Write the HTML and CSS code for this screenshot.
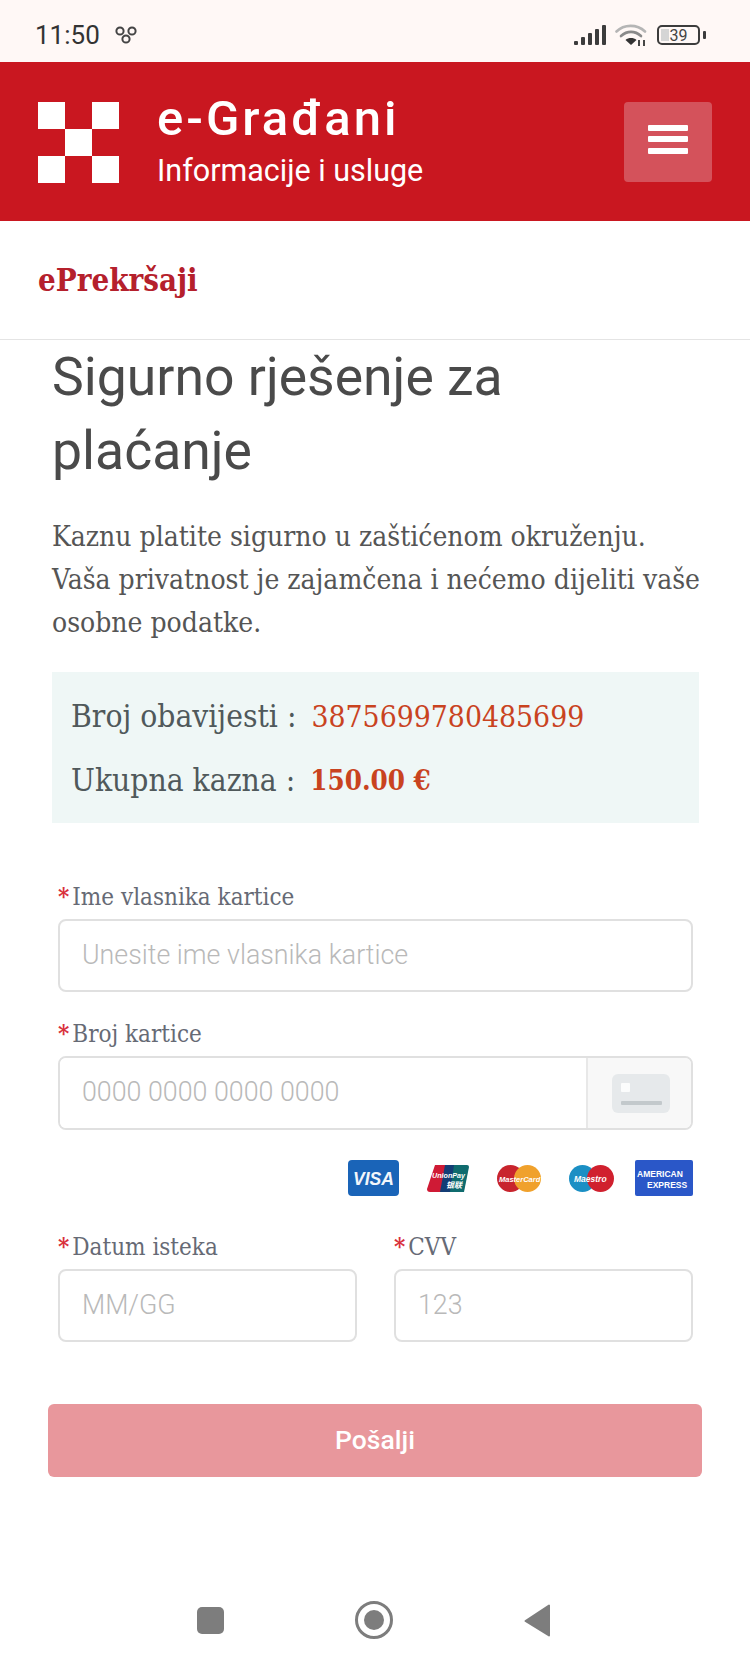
FILE: index.html
```html
<!DOCTYPE html>
<html lang="hr">
<head>
<meta charset="utf-8">
<title>ePrekršaji</title>
<link rel="stylesheet" href="styles.css">
</head>
<body>
<div class="page">
  <div class="status">
    <div class="status-left">
      <span class="time">11:50</span>
      <svg class="notif" width="22" height="18" viewBox="0 0 22 18"><g fill="none" stroke="#444" stroke-width="2"><circle cx="5" cy="5" r="3.6"/><circle cx="17" cy="5" r="3.6"/><circle cx="11" cy="13" r="3.6"/></g></svg>
    </div>
    <div class="status-right">
      <svg width="34" height="22" viewBox="0 0 34 22"><g fill="#3c3c3c"><rect x="1" y="17" width="4" height="4" rx="1"/><rect x="8" y="13" width="4" height="8" rx="1"/><rect x="15" y="9" width="4" height="12" rx="1"/><rect x="22" y="5" width="4" height="16" rx="1"/><rect x="29" y="1" width="4" height="20" rx="1"/></g></svg>
      <svg class="wifi" width="32" height="24" viewBox="0 0 32 24"><g fill="none" stroke-linecap="round"><path d="M1.5 8.5C9 1 22 1 30 8.5" stroke="#b5b5b5" stroke-width="2.6"/><path d="M6 13c6-5.500 14-5.500 20 0" stroke="#8a8a8a" stroke-width="2.600"/></g><path d="M10.500 17c3-2.600 8-2.600 11 0l-5.500 5z" fill="#333"/><path d="M24 23v-6M29 23v-6" stroke="#333" stroke-width="1.800"/></svg>
      <div class="battery"><div class="battery-body"><span class="battery-level"></span><span class="battery-text">39</span></div><span class="battery-tip"></span></div>
    </div>
  </div>

  <header class="header">
    <div class="brand">
      <svg class="logo" width="81" height="81" viewBox="0 0 81 81"><g fill="#fff"><rect width="27" height="27"/><rect x="54" width="27" height="27"/><rect x="27" y="27" width="27" height="27"/><rect y="54" width="27" height="27"/><rect x="54" y="54" width="27" height="27"/></g></svg>
      <div class="brand-text">
        <div class="brand-title">e-Građani</div>
        <div class="brand-sub">Informacije i usluge</div>
      </div>
    </div>
    <button class="menu-btn" type="button" aria-label="Izbornik"><span></span><span></span><span></span></button>
  </header>

  <nav class="subnav"><a class="subnav-link">ePrekršaji</a></nav>

  <main class="content">
    <h1 class="title">Sigurno rješenje za plaćanje</h1>
    <p class="lead">Kaznu platite sigurno u zaštićenom okruženju. Vaša privatnost je zajamčena i nećemo dijeliti vaše osobne podatke.</p>

    <div class="summary">
      <div class="summary-row"><span class="summary-label">Broj obavijesti :</span><span class="summary-value">3875699780485699</span></div>
      <div class="summary-row"><span class="summary-label">Ukupna kazna :</span><strong class="summary-value summary-total">150.00 €</strong></div>
    </div>

    <form class="form">
      <div class="field">
        <label class="label"><span class="req">*</span>Ime vlasnika kartice</label>
        <input class="input" placeholder="Unesite ime vlasnika kartice">
      </div>
      <div class="field field-gap">
        <label class="label"><span class="req">*</span>Broj kartice</label>
        <div class="input-group">
          <input class="input input-inner" placeholder="0000 0000 0000 0000">
          <div class="addon">
            <svg width="58" height="39" viewBox="0 0 58 39"><rect width="58" height="39" rx="6" fill="#e6e9eb"/><rect x="9" y="9" width="9" height="9" rx="1" fill="#fbfcfc"/><rect x="9" y="27" width="41" height="4" rx="1" fill="#c3c9cc"/></svg>
          </div>
        </div>
      </div>
      <div class="cards">
        <svg width="51" height="36" viewBox="0 0 51 36"><rect width="51" height="36" rx="4" fill="#1a64b8"/><text x="5" y="24.500" class="visa" textLength="41" lengthAdjust="spacingAndGlyphs">VISA</text></svg>
        <svg width="42" height="27" viewBox="0 0 42 27"><path d="M8 0h14l-5 27H3a3 3 0 0 1-3-3z" fill="#cf1a35"/><path d="M18 0h12l-5 27H13z" fill="#133d75"/><path d="M27 0h13a2 2 0 0 1 2 2l-5 25H23z" fill="#0f6b6e"/><text x="5" y="13" class="up" textLength="33" lengthAdjust="spacingAndGlyphs">UnionPay</text><text x="19" y="23" class="up">银联</text></svg>
        <svg width="44" height="27" viewBox="0 0 44 27"><circle cx="13.500" cy="13.500" r="13.500" fill="#c8242d"/><circle cx="30.500" cy="13.500" r="13.500" fill="#f0a12c"/><text x="2" y="16.500" class="mc">MasterCard</text></svg>
        <svg width="45" height="27" viewBox="0 0 45 27"><circle cx="13.500" cy="13.500" r="13.500" fill="#1b8fc4"/><circle cx="31.500" cy="13.500" r="13.500" fill="#d0202e"/><text x="5" y="17" class="mc mc-maestro">Maestro</text></svg>
        <svg class="amex-card" width="58" height="36" viewBox="0 0 58 36"><rect width="58" height="36" rx="2" fill="#2a57c8"/><text x="2" y="16.500" class="amex">AMERICAN</text><text x="12" y="27.500" class="amex">EXPRESS</text></svg>
      </div>
      <div class="split">
        <div class="field">
          <label class="label"><span class="req">*</span>Datum isteka</label>
          <input class="input" placeholder="MM/GG">
        </div>
        <div class="field">
          <label class="label"><span class="req">*</span>CVV</label>
          <input class="input" placeholder="123">
        </div>
      </div>
      <button class="submit" type="button">Pošalji</button>
    </form>
  </main>

  <footer class="navbar">
    <span class="nav-square"></span>
    <span class="nav-circle"><span class="nav-dot"></span></span>
    <svg width="27" height="33" viewBox="0 0 27 33"><path d="M25 1.500v30L1.500 17z" fill="#7d7d7d" stroke="#7d7d7d" stroke-width="2" stroke-linejoin="round"/></svg>
  </footer>
</div>
</body>
</html>
```

FILE: styles.css
```css
* { box-sizing: border-box; }
html, body { margin: 0; padding: 0; background: #fff; }
.page { width: 750px; min-height: 1668px; display: flex; flex-direction: column; font-family: "Roboto", sans-serif; }

.status { height: 62px; background: #fff8f6; display: flex; justify-content: space-between; align-items: center; padding: 8px 44px 0 35px; flex: none; }
.status-left { display: flex; align-items: center; gap: 15px; }
.time { font-size: 26px; color: #333; }
.status-right { display: flex; align-items: center; gap: 8px; }
.battery { display: flex; align-items: center; gap: 3px; margin-left: 2px; }
.battery-body { position: relative; width: 43px; height: 20px; border: 2px solid #3c3c3c; border-radius: 5px; display: flex; align-items: center; justify-content: center; }
.battery-level { position: absolute; left: 2px; top: 2px; bottom: 2px; width: 8px; background: #d5d5d5; }
.battery-text { position: relative; font-size: 16px; color: #444; }
.battery-tip { width: 3px; height: 8px; background: #3c3c3c; border-radius: 1px; }

.header { height: 159px; background: #c91720; display: flex; justify-content: space-between; align-items: center; padding: 0 38px; flex: none; }
.brand { display: flex; align-items: center; gap: 38px; }
.logo { margin-top: 2px; }
.brand-text { color: #fff; }
.brand-title { font-size: 49px; font-weight: 500; line-height: 52px; letter-spacing: 3px; margin-bottom: 7px; }
.brand-sub { font-size: 30.500px; line-height: 38px; }
.menu-btn { width: 88px; height: 80px; background: #d4525b; border: 0; border-radius: 4px; display: flex; flex-direction: column; align-items: center; justify-content: center; gap: 5.500px; padding: 0 0 5px; }
.menu-btn span { width: 40px; height: 6px; background: #fff; border-radius: 1px; }

.subnav { height: 119px; border-bottom: 1px solid #e4e4e4; display: flex; align-items: center; padding: 0 38px; flex: none; }
.subnav-link { font-family: "DejaVu Serif Condensed", "DejaVu Serif", serif; font-stretch: condensed; font-size: 31px; font-weight: 700; color: #b5202c; }

.content { padding: 0 48px; }
.title { margin: 0 130px 0 4px; font-size: 53.500px; font-weight: 400; line-height: 74px; color: #4a4a4a; }
.lead { margin: 27px 0 28px 4px; font-family: "DejaVu Serif Condensed", "DejaVu Serif", serif; font-stretch: condensed; font-size: 28px; line-height: 43px; color: #555; }

.summary { margin: 0 3px 0 4px; padding: 12px 19px 11px; background: #eff7f6; font-family: "DejaVu Serif Condensed", "DejaVu Serif", serif; font-stretch: condensed; font-size: 31.500px; }
.summary-row { height: 64px; display: flex; align-items: center; gap: 15px; }
.summary-label { color: #50595b; }
.summary-value { color: #c9431f; font-size: 29.800px; }
.summary-total { font-size: 27.500px; }

.form { margin-top: 59px; padding: 0 9px 0 10px; display: flex; flex-direction: column; }
.label { display: block; font-family: "DejaVu Serif Condensed", "DejaVu Serif", serif; font-stretch: condensed; font-size: 24px; line-height: 30px; color: #666a75; margin-bottom: 7px; }
.req { color: #d9303b; margin-right: 3px; font-weight: 700; }
.input { display: block; width: 100%; height: 73px; border: 2px solid #e0e0e0; border-radius: 8px; padding: 0 22px 2px; font-family: "Roboto", sans-serif; font-size: 26.800px; font-weight: 300; background: #fff; outline: 0; }
.input::placeholder { color: #b9b9b9; opacity: 1; }
.field-gap { margin-top: 27px; }
.input-group { display: flex; height: 74px; border: 2px solid #e0e0e0; border-radius: 8px; overflow: hidden; }
.input-inner { flex: 1; height: 100%; border: 0; border-radius: 0; padding: 0 22px 2px; min-width: 0; }
.addon { width: 105px; background: #f8f8f8; border-left: 2px solid #e8e8e8; display: flex; align-items: center; justify-content: center; padding-left: 3px; flex: none; }

.cards { margin-top: 30px; height: 36px; display: flex; justify-content: flex-end; align-items: center; gap: 28px; }
.amex-card { margin-left: -7px; }
.visa { font: italic 700 19px "Liberation Sans", sans-serif; fill: #f2f6fb; }
.up { font: italic 700 8px "Liberation Sans", "Noto Sans CJK SC", sans-serif; fill: #fff; }
.mc { font: italic 700 7.500px "Liberation Sans", sans-serif; fill: #fff; }
.mc-maestro { font-size: 8.500px; }
.amex { font: 700 8.500px "Liberation Sans", sans-serif; fill: #fff; }

.split { margin-top: 36px; display: grid; grid-template-columns: 299px 299px; column-gap: 37px; }
.submit { margin: 62px -9px 0 -10px; height: 73px; border: 0; border-radius: 6px; background: #e8979c; color: #fff; font-family: "Roboto", sans-serif; font-size: 26.500px; font-weight: 500; padding: 0 0 2px; }

.navbar { margin-top: auto; height: 96px; display: flex; align-items: center; justify-content: center; gap: 131px; padding-right: 2px; flex: none; }
.nav-square { width: 27px; height: 27px; background: #7d7d7d; border-radius: 5px; }
.nav-circle { width: 38px; height: 38px; border: 3px solid #7d7d7d; border-radius: 50%; display: flex; align-items: center; justify-content: center; }
.nav-dot { width: 20px; height: 20px; background: #7d7d7d; border-radius: 50%; }
```
